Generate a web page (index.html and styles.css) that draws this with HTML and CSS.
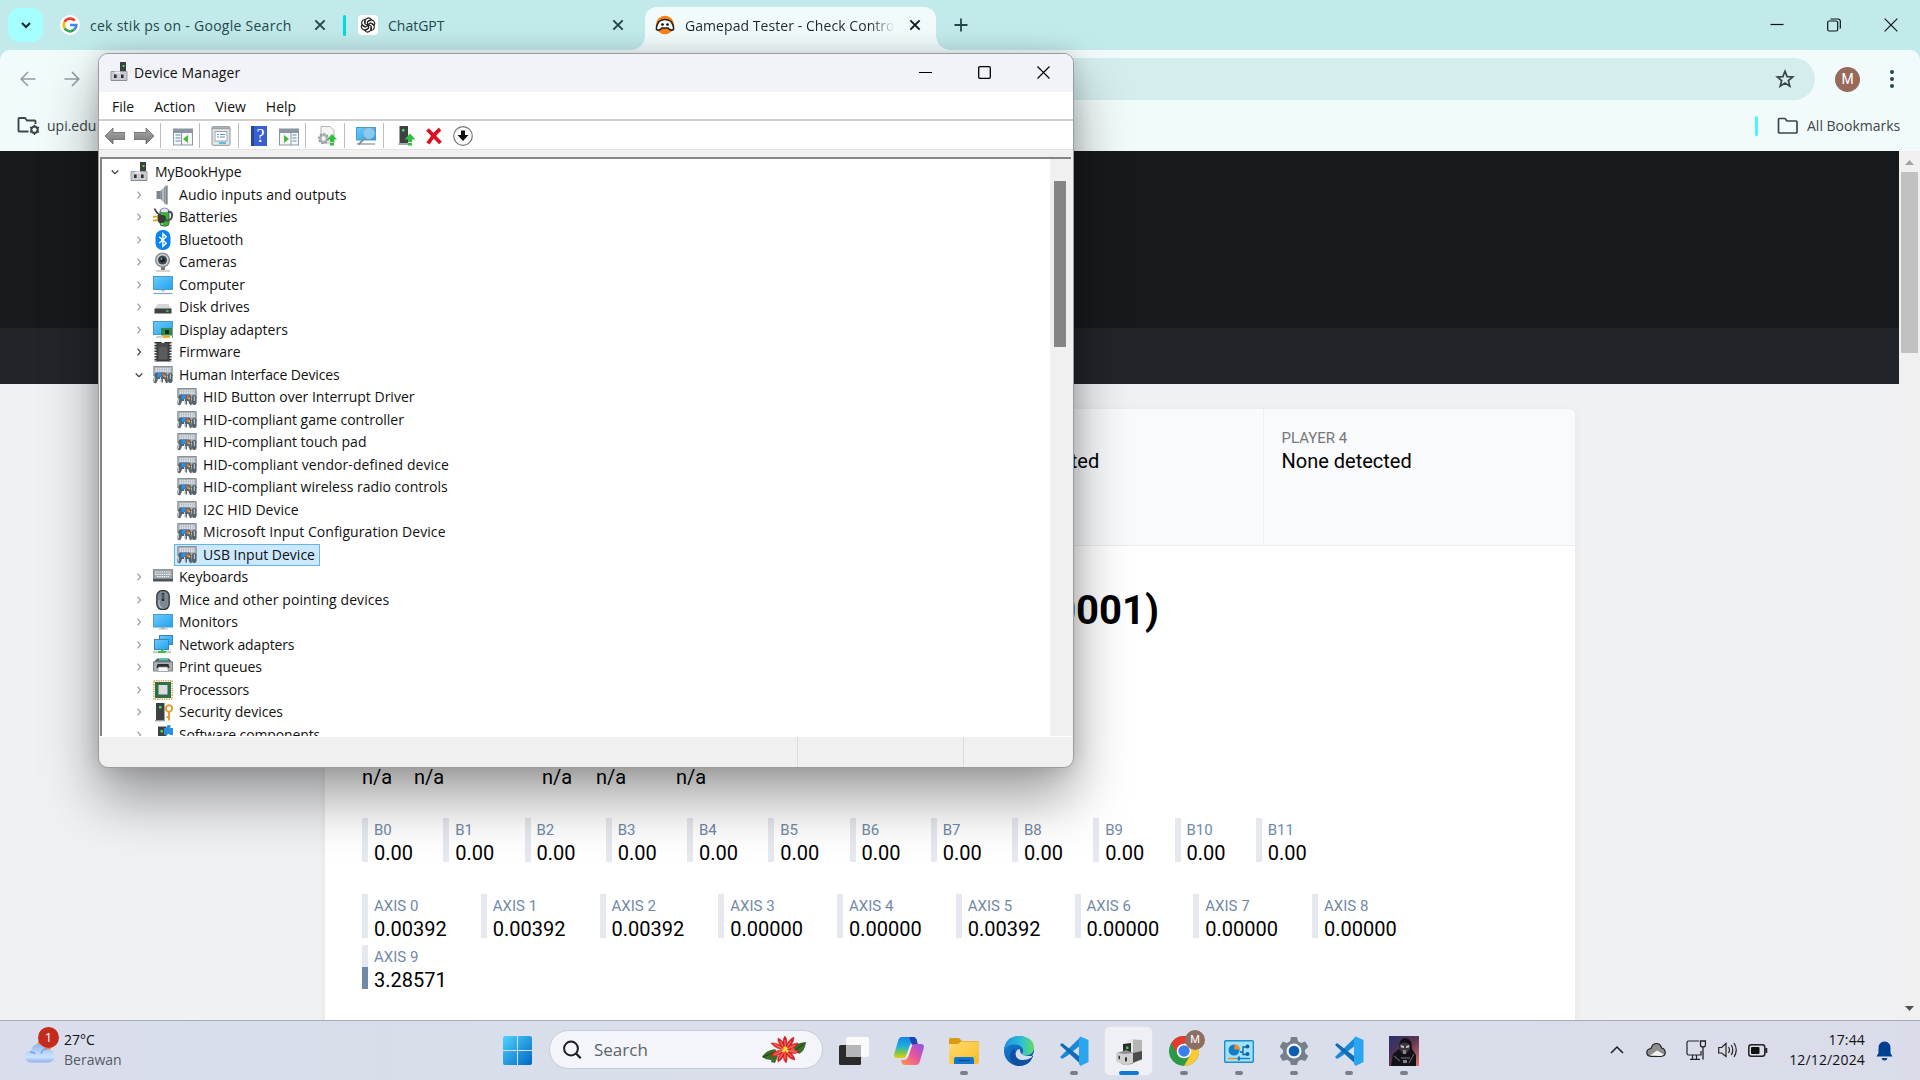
FILE: index.html
```html
<!DOCTYPE html>
<html lang="en">
<head>
<meta charset="utf-8">
<title>Gamepad Tester</title>
<link rel="stylesheet" href="styles.css">
</head>
<body>
<svg class="defs" aria-hidden="true">
  <defs>
    <linearGradient id="gScreen" x1="0" y1="0" x2="1" y2="1"><stop offset="0" stop-color="#6fcbfb"/><stop offset="1" stop-color="#1fa2f4"/></linearGradient>
    <linearGradient id="gGrey" x1="0" y1="0" x2="0" y2="1"><stop offset="0" stop-color="#aaa"/><stop offset="1" stop-color="#777"/></linearGradient>
    <linearGradient id="gSteel" x1="0" y1="0" x2="1" y2="0"><stop offset="0" stop-color="#5f6a73"/><stop offset=".5" stop-color="#c4cbd1"/><stop offset="1" stop-color="#6a747c"/></linearGradient>
    <linearGradient id="gWin" x1="0" y1="0" x2="1" y2="1"><stop offset="0" stop-color="#4fd3ff"/><stop offset="1" stop-color="#0067c4"/></linearGradient>
    <linearGradient id="gFolder" x1="0" y1="0" x2="1" y2="1"><stop offset="0" stop-color="#ffdc70"/><stop offset="1" stop-color="#f9bb26"/></linearGradient>
    <linearGradient id="gEdge" x1="0" y1="0" x2="1" y2="0"><stop offset="0" stop-color="#1b8fe0"/><stop offset=".6" stop-color="#2fc1d6"/><stop offset="1" stop-color="#62dd5c"/></linearGradient>
    <linearGradient id="gEdge2" x1="0" y1="0" x2="1" y2="1"><stop offset="0" stop-color="#1783d8"/><stop offset="1" stop-color="#0c4a9a"/></linearGradient>
    <linearGradient id="gCopA" x1="0" y1="0" x2="0" y2="1"><stop offset="0" stop-color="#1583e8"/><stop offset=".45" stop-color="#1fb0d8"/><stop offset=".75" stop-color="#7cc84e"/><stop offset="1" stop-color="#f2c811"/></linearGradient>
    <linearGradient id="gCopB" x1="1" y1="0" x2="0" y2="1"><stop offset="0" stop-color="#8a52e8"/><stop offset=".5" stop-color="#e9569c"/><stop offset="1" stop-color="#ff9a4a"/></linearGradient>
    <linearGradient id="gCloud" x1="0" y1="0" x2="0" y2="1"><stop offset="0" stop-color="#8fb6f0"/><stop offset=".7" stop-color="#cfe3fb"/><stop offset="1" stop-color="#8ab0ee"/></linearGradient>
    <linearGradient id="gVader" x1="0" y1="0" x2="1" y2="1"><stop offset="0" stop-color="#27306a"/><stop offset=".5" stop-color="#5d3550"/><stop offset="1" stop-color="#e57a6a"/></linearGradient>
    <linearGradient id="gPetal" x1="0" y1="0" x2="0" y2="1"><stop offset="0" stop-color="#c9151a"/><stop offset=".5" stop-color="#f2443a"/><stop offset="1" stop-color="#d81e1e"/></linearGradient>

    <symbol id="close" viewBox="0 0 12 12"><path d="M2 2l8 8M10 2l-8 8" stroke="currentColor" stroke-width="1.7" fill="none"/></symbol>
    <symbol id="root" viewBox="0 0 20 20">
      <rect x="11" y="0" width="6" height="11" fill="#3c4043"/><rect x="13.500" y="3" width="2" height="2" fill="#3be04a"/>
      <path d="M2 9.500h16v9H2z" fill="#c9ccd0" stroke="#9a9da1"/><path d="M6 9.500h5v2H6z" fill="#eee"/>
      <rect x="5" y="12.500" width="2.600" height="3.500" fill="#2e3134"/><rect x="12" y="12.500" width="2.600" height="3.500" fill="#2e3134"/><path d="M2 18.500h16" stroke="#8a8d90"/>
    </symbol>
    <symbol id="audio" viewBox="0 0 20 20"><path d="M3.500 6h4v8h-4z" fill="#7c8790"/><path d="M7.500 6l5-5.500v19L7.500 14z" fill="url(#gSteel)"/><path d="M12.500.5h2.500v19h-2.500z" fill="#a4adb5"/><path d="M13.300 1v18" stroke="#737c84"/></symbol>
    <symbol id="battery" viewBox="0 0 20 20"><rect x="7" y="2" width="9" height="17" rx="3" fill="#35b435" stroke="#4e5d50"/><path d="M7.500 5.500V4q0-3 4-3t4 3v1.500z" fill="#dfe6f5" stroke="#6b7280" stroke-width=".7"/><path d="M9 10v8" stroke="#91e080" stroke-width="1.500"/><path d="M1.500 1.500q2 5 6 6.500" stroke="#3a3a3a" stroke-width="1.600" fill="none"/><path d="M15 5q4.500-1 4 4t-6 4.500" stroke="#4a4f50" stroke-width="2" fill="none"/><path d="M4.500 8h5q3.500 0 3.500 3.500T9.500 16h-3L4.500 14z" fill="#3b3b3b"/><path d="M0 9.700h5M0 13.300h5" stroke="#d8a21a" stroke-width="1.800"/></symbol>
    <symbol id="bt" viewBox="0 0 20 20"><rect x="2.500" y="0" width="15" height="20" rx="7" fill="#0a84f5"/><path d="M6.200 6.700l7 6.600-3.300 3V3.700l3.300 3-7 6.600" stroke="#fff" stroke-width="1.400" fill="none"/></symbol>
    <symbol id="camera" viewBox="0 0 20 20"><path d="M8 14h4v4H8z" fill="#777"/><path d="M3 19h14" stroke="#b5b5b5" stroke-width="1.200"/><circle cx="9.500" cy="8" r="7.600" fill="#8e9194"/><circle cx="9.500" cy="8" r="6" fill="#d5d8da"/><circle cx="9.500" cy="8" r="4.600" fill="#3f4850"/><circle cx="9.500" cy="8" r="2.300" fill="#141a20"/><circle cx="8.500" cy="7" r="1" fill="#6fa0d0"/></symbol>
    <symbol id="computer" viewBox="0 0 20 20"><rect x=".5" y="1.500" width="19" height="13" fill="url(#gScreen)" stroke="#4b9ac8"/><path d="M8 15h4v1.500H8z" fill="#b5c6d3"/><path d="M.5 18.500h19" stroke="#8ba7bb" stroke-width="1.300"/></symbol>
    <symbol id="disk" viewBox="0 0 20 20"><path d="M4.500 7h11l3 5h-17z" fill="#d5d6d8"/><rect x="1.500" y="11.500" width="17" height="5" fill="#3f4245"/><rect x="13" y="13.300" width="2.600" height="1.500" fill="#45d64c"/></symbol>
    <symbol id="display" viewBox="0 0 20 20"><rect x=".5" y="1.500" width="19" height="13" fill="url(#gScreen)" stroke="#4b9ac8"/><path d="M3 17h6" stroke="#8ba7bb"/><rect x="8" y="8" width="11.500" height="7.500" fill="#2b8a4e"/><rect x="12" y="10" width="4" height="4" fill="#1d2a24"/><path d="M9.500 16.700h7.500" stroke="#e9a91c" stroke-width="2.200"/><path d="M19.500 7v11" stroke="#8c979d"/></symbol>
    <symbol id="firmware" viewBox="0 0 20 20"><path d="M2.700 0v20M17.300 0v20" stroke="#343638" stroke-width="2.500" stroke-dasharray="1.600 1.200"/><path d="M4 .5h4q2 3 4 0h4V19H4z" fill="#4a4c4e" stroke="#2b2d2f"/><path d="M6 17V5h8v12z" fill="#5a5c5e"/></symbol>
    <symbol id="hid" viewBox="0 0 20 20"><rect x=".8" y="1.500" width="18.400" height="9" fill="#aab3bb" stroke="#87929b"/><path d="M2.500 3.800h15M2.500 6h15" stroke="#eef1f3" stroke-width="1.300" stroke-dasharray="1.600 .7"/><path d="M3.500 7.500h8.500q1.700 0 2.200 3L15 16q0 2.500-1.600 2.200-1-.2-2-4.200H10v3.500H8.500V14H5q-1 4-2.300 4.200Q.3 18.500.4 15.500l.8-5q.5-3 2.300-3z" fill="#59636c"/><path d="M1.500 11.500v5" stroke="#b9c1c8" stroke-width="1.300"/><path d="M4.500 8.500l4-1 .3 4-4.300.7z" fill="#2193f5"/><path d="M9.700 8.500h1.800v3.500H9.700z" fill="#e6703a"/><path d="M11.500 10.500h1.400v1.700h-1.400z" fill="#f5d23c"/><path d="M7.500 12v5" stroke="#d5dadf" stroke-width="1"/><rect x="14.900" y="8" width="4.700" height="10" rx="2.200" fill="#56616a"/><path d="M17.300 9v5" stroke="#ccd3d8"/></symbol>
    <symbol id="keyboard" viewBox="0 0 20 20"><rect x=".5" y="2.700" width="19" height="9" fill="#9ca5ad" stroke="#7d868e"/><path d="M2 5h16M2 7.300h16M4 9.600h12" stroke="#f4f6f7" stroke-width="1.200" stroke-dasharray="1.500 .7"/><rect x="0" y="12" width="20" height="2.500" fill="#4c545b"/></symbol>
    <symbol id="mouse" viewBox="0 0 20 20"><rect x="3.800" y=".6" width="12.400" height="19" rx="5.500" fill="#7c8994" stroke="#2d3338" stroke-width="1.300"/><path d="M6 10v4q1 3.500 3 3.500" stroke="#aab6c0" stroke-width="1.300" fill="none"/><path d="M10 3v8" stroke="#202427" stroke-width="2.400"/><path d="M10 4v5" stroke="#8e989f" stroke-width=".9"/></symbol>
    <symbol id="monitor" viewBox="0 0 20 20"><rect x=".5" y="2.500" width="19" height="12.500" fill="url(#gScreen)" stroke="#4b9ac8"/><path d="M8 15.500h4v1.200H8zM5 17h10" fill="#b5c6d3" stroke="#9fb2c2" stroke-width=".8"/></symbol>
    <symbol id="network" viewBox="0 0 20 20"><rect x="6.500" y=".5" width="13" height="9" fill="url(#gScreen)" stroke="#3f83b0"/><rect x="1.500" y="4.500" width="14" height="10" fill="url(#gScreen)" stroke="#3f83b0"/><path d="M0 17h18" stroke="#c9cccf" stroke-width="2.500"/><path d="M8 14.500h2.500v1.500H13v2H5v-2h3z" fill="#35c04a"/></symbol>
    <symbol id="printer" viewBox="0 0 20 20"><path d="M4 1.500h12l3.500 4H.5z" fill="#5b6166"/><path d="M6.500 1.500h8l1 2h-10z" fill="#4cc6b0"/><rect x=".5" y="5" width="19" height="9" fill="#a9b1b8" stroke="#7d858b"/><path d="M4.500 7h11l1 4h-13z" fill="#2b2e30"/><path d="M5.500 10h9l1 4.500h-11z" fill="#f5f5f5" stroke="#8d9499" stroke-width=".7"/></symbol>
    <symbol id="cpu" viewBox="0 0 20 20"><rect x=".8" y=".8" width="18.400" height="18.400" fill="none" stroke="#c9a544" stroke-width="1.500" stroke-dasharray="1.300 1"/><rect x="2" y="2" width="16" height="16" fill="#2f6d4c"/><rect x="5.500" y="5" width="9" height="9.500" fill="#d9dcda"/></symbol>
    <symbol id="security" viewBox="0 0 20 20"><rect x="3" y="1" width="8.500" height="17" fill="#3e4144"/><rect x="6" y="4" width="2.500" height="2.500" fill="#3fdf4a"/><path d="M2 18.700h10" stroke="#909396" stroke-width="1.200"/><circle cx="16" cy="6.500" r="3.200" fill="none" stroke="#e2a12f" stroke-width="2"/><path d="M16 9.500v9M16 15h-2.500" stroke="#e2a12f" stroke-width="2"/></symbol>
    <symbol id="software" viewBox="0 0 20 20"><rect x="5" y="1.500" width="8.500" height="17" fill="#3e4144"/><rect x="7.500" y="5" width="2.500" height="2.500" fill="#3fdf4a"/><path d="M11 3h3q-1-3 2-3t1 3h3v7h-3q-1-2-3 0h-3z" fill="#2b8fe0"/></symbol>

    <symbol id="vscode" viewBox="0 0 30 30"><path d="M21 1.500L3.500 18.500 1 21l2 2L8 20 23 8z" fill="#1a8ad6"/><path d="M1 9l2-2 19 14.500v7z" fill="#0f6db8"/><path d="M21.500.5L29.500 4v22l-8 4-1.500-2V2z" fill="#2aa5f0"/></symbol>
  </defs>
</svg>

<header class="browser">
  <div class="tabs">
    <span class="tab-search"><svg width="12" height="12" viewBox="0 0 12 12"><path d="M2 4l4 4 4-4" fill="none" stroke="#0b2a2c" stroke-width="2"/></svg></span>
    <div class="tab tab-a">
      <svg class="fav" viewBox="0 0 20 20"><circle cx="10" cy="10" r="10" fill="#fff"/><g fill="none" stroke-width="2.700"><path d="M14.800 5.600A6.300 6.300 0 0 0 4.600 7" stroke="#ea4335"/><path d="M4.600 7a6.300 6.300 0 0 0 0 6.200" stroke="#fbbc05"/><path d="M4.600 13.200a6.300 6.300 0 0 0 9.700 1.400" stroke="#34a853"/><path d="M14.300 14.600A6.300 6.300 0 0 0 16.300 10H10" stroke="#4285f4"/></g></svg>
      <span class="tab-title t1">cek stik ps on - Google Search</span>
      <svg class="x"><use href="#close"/></svg>
    </div>
    <i class="tab-sep"></i>
    <div class="tab tab-b">
      <svg class="fav" viewBox="0 0 20 20"><rect width="20" height="20" rx="4" fill="#fff"/><g transform="translate(10 10)" fill="none" stroke="#222" stroke-width="1.200"><path d="M-3-1.700V-4A3.400 3.400 0 0 1 3.200-5.500L-.5-3.400V1"/><path d="M-3-1.700V-4A3.400 3.400 0 0 1 3.200-5.500L-.5-3.400V1" transform="rotate(60)"/><path d="M-3-1.700V-4A3.400 3.400 0 0 1 3.200-5.500L-.5-3.400V1" transform="rotate(120)"/><path d="M-3-1.700V-4A3.400 3.400 0 0 1 3.200-5.500L-.5-3.400V1" transform="rotate(180)"/><path d="M-3-1.700V-4A3.400 3.400 0 0 1 3.200-5.500L-.5-3.400V1" transform="rotate(240)"/><path d="M-3-1.700V-4A3.400 3.400 0 0 1 3.200-5.500L-.5-3.400V1" transform="rotate(300)"/></g></svg>
      <span class="tab-title t2">ChatGPT</span>
      <svg class="x"><use href="#close"/></svg>
    </div>
    <div class="tab tab-c">
      <svg class="fav" viewBox="0 0 20 20"><circle cx="10" cy="10" r="9.200" fill="#ff7f11"/><path d="M4 6.500Q10 2.500 16 6.500 19 11 18.500 14.500q-3 1.800-5.500-1.500H7Q4.500 16.300 1.500 14.500 1 11 4 6.500z" fill="#fff" stroke="#222" stroke-width="1.500"/><circle cx="7.500" cy="9.500" r="1.300"/><circle cx="12.500" cy="9.500" r="1.300"/></svg>
      <span class="tab-title t3">Gamepad Tester - Check Contro</span>
      <svg class="x"><use href="#close"/></svg>
    </div>
    <svg class="plus" viewBox="0 0 14 14"><path d="M7 .5v13M.5 7h13" stroke="#24484b" stroke-width="1.800"/></svg>
    <div class="win-controls">
      <svg width="14" height="14" viewBox="0 0 14 14"><path d="M.5 6.500h13" stroke="#111" stroke-width="1.200"/></svg>
      <svg width="14" height="14" viewBox="0 0 14 14"><rect x=".7" y="3" width="10" height="10" rx="1.500" fill="none" stroke="#111" stroke-width="1.200"/><path d="M3.500 1H11q2.300 0 2.300 2.300V10.500" fill="none" stroke="#111" stroke-width="1.200"/></svg>
      <svg width="14" height="14" viewBox="0 0 14 14"><path d="M.7.700l12.600 12.600M13.300.7L.7 13.300" stroke="#111" stroke-width="1.200"/></svg>
    </div>
  </div>
  <div class="chrome-body">
    <div class="toolbar">
      <svg class="nav" viewBox="0 0 16 16"><path d="M15.500 8H1.500M8 1L1.200 8 8 15" fill="none" stroke="#929c9e" stroke-width="1.600"/></svg>
      <svg class="nav" viewBox="0 0 16 16"><path d="M.5 8h14M8 1l6.800 7L8 15" fill="none" stroke="#929c9e" stroke-width="1.600"/></svg>
      <div class="omnibox"><svg width="20" height="20" viewBox="0 0 20 20"><path d="M10 2.300l2.100 5.300 5.600.4-4.300 3.600 1.400 5.500L10 14.100 5.200 17.100l1.400-5.500L2.300 8l5.600-.4z" fill="none" stroke="#3a4446" stroke-width="1.700"/></svg></div>
      <span class="avatar">M</span>
      <svg class="dots" width="6" height="20" viewBox="0 0 6 20"><g fill="#24484b"><circle cx="3" cy="3" r="2"/><circle cx="3" cy="10" r="2"/><circle cx="3" cy="17" r="2"/></g></svg>
    </div>
    <div class="bookmarks">
      <svg width="23" height="20" viewBox="0 0 23 20"><path d="M11.500 15.500H2.500Q1.500 15.500 1.500 14.500V3Q1.500 2 2.500 2H8l2 2.500h7.500q1 0 1 1V8" fill="none" stroke="#3d4648" stroke-width="1.900"/><circle cx="17.500" cy="13.800" r="3.300" fill="none" stroke="#3d4648" stroke-width="2"/><path d="M17.500 8.700v10.200M13 11.200l9 5.200M22 11.200l-9 5.200" stroke="#3d4648" stroke-width="1.500"/><circle cx="17.500" cy="13.800" r="2" fill="#f2fbfc"/></svg>
      <span class="bm-a">upi.edu</span>
      <i class="bm-sep"></i>
      <svg width="22" height="18" viewBox="0 0 22 18"><path d="M1.500 2.500q0-1 1-1H8l2 2.500h9q1 0 1 1v10q0 1-1 1H2.500q-1 0-1-1z" fill="none" stroke="#3d4648" stroke-width="1.700"/></svg>
      <span class="bm-b">All Bookmarks</span>
    </div>
  </div>
</header>

<main class="viewport">
  <div class="page">
    <div class="hero"></div>
    <div class="subnav"></div>
    <section class="card">
      <div class="players">
        <div class="player"></div>
        <div class="player"></div>
        <div class="player p3"><b>None detected</b></div>
        <div class="player"><small>PLAYER 4</small><b>None detected</b></div>
      </div>
      <h1>0001)</h1>
      <div class="meta"><span class="m1">n/a</span><span class="m2">n/a</span><span class="m3">n/a</span><span class="m4">n/a</span><span>n/a</span></div>
      <div class="buttons">
        <div class="cell"><small>B0</small><b>0.00</b></div><div class="cell"><small>B1</small><b>0.00</b></div><div class="cell"><small>B2</small><b>0.00</b></div><div class="cell"><small>B3</small><b>0.00</b></div><div class="cell"><small>B4</small><b>0.00</b></div><div class="cell"><small>B5</small><b>0.00</b></div><div class="cell"><small>B6</small><b>0.00</b></div><div class="cell"><small>B7</small><b>0.00</b></div><div class="cell"><small>B8</small><b>0.00</b></div><div class="cell"><small>B9</small><b>0.00</b></div><div class="cell"><small>B10</small><b>0.00</b></div><div class="cell"><small>B11</small><b>0.00</b></div>
      </div>
      <div class="axes">
        <div class="cell"><small>AXIS 0</small><b>0.00392</b></div><div class="cell"><small>AXIS 1</small><b>0.00392</b></div><div class="cell"><small>AXIS 2</small><b>0.00392</b></div><div class="cell"><small>AXIS 3</small><b>0.00000</b></div><div class="cell"><small>AXIS 4</small><b>0.00000</b></div><div class="cell"><small>AXIS 5</small><b>0.00392</b></div><div class="cell"><small>AXIS 6</small><b>0.00000</b></div><div class="cell"><small>AXIS 7</small><b>0.00000</b></div><div class="cell"><small>AXIS 8</small><b>0.00000</b></div><div class="cell full"><small>AXIS 9</small><b>3.28571</b></div>
      </div>
    </section>
  </div>
  <div class="scrollbar">
    <svg width="21" height="21" viewBox="0 0 21 21"><path d="M6 14h9l-4.500-5z" fill="#a3a3a3"/></svg>
    <i class="thumb"></i>
    <svg class="down" width="21" height="21" viewBox="0 0 21 21"><path d="M6 7h9l-4.500 5z" fill="#505050"/></svg>
  </div>
</main>

<footer class="taskbar">
  <div class="weather">
    <svg width="32" height="40" viewBox="0 0 32 40"><circle cx="21" cy="17" r="7.500" fill="#f4862a"/><path d="M8 35.500Q1 35.500 1 29.500T7 24Q8 17 14.500 17q5 0 7 5 9 0 9 7t-8 6.500z" fill="url(#gCloud)"/><path d="M17 27q1-5 6-5M6 25q4 0 5 2" stroke="#5e92e6" stroke-width="1.300" fill="none" opacity=".7"/></svg>
    <span class="badge">1</span>
    <div><b>27°C</b><span>Berawan</span></div>
  </div>
  <div class="dock">
    <svg class="start" viewBox="0 0 29 29"><path d="M0 2q0-2 2-2h12v14H0zM15 0h12q2 0 2 2v12H15zM0 15h14v14H2q-2 0-2-2zM15 15h14v12q0 2-2 2H15z" fill="url(#gWin)"/></svg>
    <div class="search">
      <svg width="20" height="20" viewBox="0 0 20 20"><circle cx="9" cy="8.500" r="6.900" fill="none" stroke="#1d1d1d" stroke-width="2"/><path d="M14 13.500l4.700 4.700" stroke="#1d1d1d" stroke-width="2.300"/></svg>
      <span>Search</span>
      <svg class="flower" width="44" height="28" viewBox="0 0 44 28">
        <path d="M0 21q4-7 13-8l3 5-6 6Q4 24 0 21zM11 18l5 2-3 7-4-1zM30 11q4-4 14-5-1 9-7 12z" fill="#3c6b2a"/><path d="M1 21l12-5M43 7L32 15" stroke="#1f3e18"/>
        <path d="M23 14Q13 13 9 7q8-1 14 7zM23 14Q15 8 16 2q7 3 7 12zM23 14Q19 5 23 0q4 5 0 14zM23 14Q25 4 32 1q0 8-9 13zM23 14q6-7 13-7-3 7-13 7zM23 14q8-3 14 2-7 4-14-2zM23 14q9 3 10 10-8-1-10-10zM23 14q4 8 1 13-5-5-1-13zM23 14q-1 9-7 12-2-6 7-12zM23 14q-6 7-14 6 3-7 14-6z" fill="url(#gPetal)" stroke="#b8141a" stroke-width=".5"/>
        <g stroke="#ff8574" stroke-width=".8"><path d="M23 14L12 8M23 14l-5-9M23 14V4M23 14l6-9M23 14l10-5M23 14l11 2M23 14l7 7M23 14v9M23 14l-6 9M23 14l-11 5"/></g>
        <g fill="#f1df35"><circle cx="23.500" cy="12.500" r="2"/><circle cx="21.500" cy="14.500" r="1.500"/><circle cx="25" cy="15" r="1.500"/></g></svg>
    </div>
    <span class="app"><svg viewBox="0 0 30 30"><rect x="0" y="9" width="22" height="20" rx="1.500" fill="#2b2b2b"/><rect x="7" y="1" width="23" height="20" rx="1.500" fill="#fafafa"/><path d="M7 9h15v12H7z" fill="#b4b6b8"/></svg></span>
    <span class="app"><svg viewBox="0 0 30 30"><path d="M8 1h11q3 0 3.500 3L23 6h-3q-3 0-4 3l-3 10q-1 3-4 3H3q-4 0-2.500-5L4 5q1-4 4-4z" fill="url(#gCopA)"/><path d="M15 1h4q3 0 4 4l1 4h-6z" fill="#1b44b8"/><path d="M22 29H11q-3 0-3.500-3L7 24h3q3 0 4-3l3-10q1-3 4-3h6q4 0 2.500 5L26 25q-1 4-4 4z" fill="url(#gCopB)"/><path d="M15.500 11q.7-2.500 3-2.500l-4 11q-.7 2-3 2z" fill="#e9effa"/></svg></span>
    <span class="app run"><svg viewBox="0 0 30 30"><path d="M0 4q0-2 2-2h8l3 3h15q2 0 2 2v6H0z" fill="#dc9a10"/><path d="M0 8h9l3-2.500h16q2 0 2 2V26q0 2-2 2H2q-2 0-2-2z" fill="url(#gFolder)"/><path d="M5 28v-5q0-2 2-2h16q2 0 2 2v5z" fill="#1079cf"/><path d="M9 24.500h12" stroke="#064b8b" stroke-width="1.300"/></svg></span>
    <span class="app"><svg viewBox="0 0 30 30"><circle cx="15" cy="15" r="15" fill="url(#gEdge2)"/><path d="M0 14Q1.500 0 15.500 0 30 1 30 12q-.5 7-7.500 7.500-4 .2-5-1.500 2-1.500 1.500-4.500Q17 8.500 10.500 8.500 3.500 8.500 0 14z" fill="url(#gEdge)"/><path d="M11 14q-1 8 7 10.500 5 1 9.700-1.500Q24 30 15 30 6 28.500 6 20q0-5 5-8z" fill="#0d519f"/><path d="M17.500 18q-2-1.500-1.500-5-4 0-4.500 5 .5 5.500 7 6 5 0 9-2.500L30 16v4l-4 0q-6 0-8.500-2z" fill="#dadeeb"/></svg></span>
    <span class="app run"><svg viewBox="0 0 30 30"><use href="#vscode"/></svg></span>
    <span class="app active"><svg viewBox="0 0 30 30"><path d="M13 5l6-1.500L28 4v20l-9 2-6-4z" fill="#b5b5b5"/><path d="M13 5l6-1.500v18L13 20z" fill="#e8e8e8"/><path d="M9 8l8-1v11l-8 1z" fill="#2c2c2c"/><rect x="12" y="10.500" width="2.500" height="2.500" fill="#35d03f"/><path d="M3 17l9-3 8 3-1 11-9 1-7-4z" fill="#8e8e8e"/><path d="M2 16.500l8 1.500 9-1v10l-8 2-9-4z" fill="#d0d0d0"/><path d="M4.500 19.500l1.500.4v3.500l-1.500-.6zM11 21.500l2-.3v4l-2 .2z" fill="#333"/><path d="M19 17l9-2v8l-9 4z" fill="#4c4c4c"/></svg></span>
    <span class="app run chrome"><svg viewBox="0 0 30 30"><circle cx="15" cy="15" r="15" fill="#2b9a47"/><path d="M2 7.500A15 15 0 0 1 28 7.500H15L9 18.500z" fill="#e33b2e"/><path d="M28 7.500A15 15 0 0 1 15 30l6.500-11.500L15 7.500z" fill="#fcc934"/><circle cx="15" cy="15" r="7.300" fill="#fff"/><circle cx="15" cy="15" r="5.700" fill="#3b7ded"/></svg><em>M</em></span>
    <span class="app run"><svg viewBox="0 0 30 30"><rect x=".7" y="4.700" width="28.600" height="21.600" rx="1" fill="#9fe0fb" stroke="#1e8fc8" stroke-width="1.400"/><circle cx="10" cy="14" r="5.500" fill="#137cc9"/><path d="M10.500 13.500V8q5 .5 5.500 5.500z" fill="#f2901f"/><path d="M16 16h3V11h3M19 16v2.500h3" stroke="#0f63a5" stroke-width="1.300" fill="none"/><g fill="#0f63a5"><circle cx="23.500" cy="10.500" r="2"/><circle cx="23.500" cy="18" r="2"/></g><path d="M4 22.500h9" stroke="#f2901f" stroke-width="1.500"/><path d="M13 22.500h13" stroke="#1079cf" stroke-width="1.300"/><path d="M15 20.500v4" stroke="#1079cf" stroke-width="2"/></svg></span>
    <span class="app run"><svg viewBox="0 0 30 30"><path d="M12 1h6l1 4.300 3 1.700 4.300-1.400 3 5.200L26 14v3l3.300 3-3 5-4.300-1.300-3 1.700L18 29h-6l-1-3.600-3-1.700L3.700 25l-3-5L4 17v-3L.7 10.800l3-5.200L8 7l3-1.700z" fill="#76808a"/><circle cx="15" cy="15" r="7.500" fill="#f0f3f6"/><circle cx="15" cy="15" r="5.300" fill="#0f5db0"/></svg></span>
    <span class="app run"><svg viewBox="0 0 30 30"><use href="#vscode"/></svg></span>
    <span class="app run"><svg viewBox="0 0 30 30"><rect width="30" height="30" fill="url(#gVader)"/><path d="M2 30l2-12 6-5q0-11 6-11 7 0 7 11l4 6v11z" fill="#121118"/><path d="M11 8q4-3 9 0l1 5-4 5h-3l-4-5z" fill="#3a3740"/><path d="M11.500 9l3.500 1v2l-3-.5zM17 10l3.500-1-.5 2.500-3 .5z" fill="#c9b8c0"/><path d="M14 14h3v4h-3z" fill="#888"/><path d="M5 20l6 5M12 22h9M20 27l5-9" stroke="#5a5560" stroke-width="1.300"/><path d="M14 24h4v3h-4z" fill="#7c8496"/></svg></span>
  </div>
  <div class="tray">
    <svg class="chev" width="14" height="10" viewBox="0 0 14 10"><path d="M1 8l6-6 6 6" fill="none" stroke="#1c1c1c" stroke-width="1.500"/></svg>
    <svg class="cl" width="20" height="16" viewBox="0 0 20 16"><path d="M5 14.300Q.8 14 .8 10.500T5 6.500Q6.500 1.500 10.500 1.500t5 4.500q3.700.7 3.700 4.500T15 14.300z" fill="#8f8f8f" stroke="#222" stroke-width="1.200"/><path d="M4 13.500l7-5 7 4-3 1.500z" fill="#f2f2f2"/></svg>
    <svg class="net" width="20" height="20" viewBox="0 0 20 20"><path d="M13 1H2.500Q1 1 1 2.500v11Q1 15 2.500 15H15v-4M6.500 15v4M10.500 15v4M4 19.300h10" fill="none" stroke="#222" stroke-width="1.200"/><path d="M14.500 1h5v4q0 2-2.500 2t-2.500-2zM17 7v12.500" fill="none" stroke="#222" stroke-width="1.300"/></svg>
    <svg class="spk" width="20" height="18" viewBox="0 0 20 18"><path d="M.7 6.500h3L8 2.500v13L3.700 12h-3z" fill="none" stroke="#222" stroke-width="1.200"/><path d="M10.500 6q2 3 0 6M13.300 4q3 5 0 10M16 2q4.500 7 0 14" fill="none" stroke="#222" stroke-width="1.200"/></svg>
    <svg width="20" height="13" viewBox="0 0 20 13"><rect x=".8" y=".8" width="16" height="11.400" rx="2.500" fill="none" stroke="#222" stroke-width="1.500"/><rect x="3" y="3" width="8.500" height="7" rx="1" fill="#111"/><path d="M18.300 4v5" stroke="#222" stroke-width="2"/></svg>
    <div class="clock"><span>17:44</span><span>12/12/2024</span></div>
    <svg width="17" height="20" viewBox="0 0 17 20"><path d="M8.500.5q6 .5 6 6.500v5l2 3.500H.5l2-3.500V7q0-6 6-6.500zM5.500 17h6q-.5 2.500-3 2.500T5.500 17z" fill="#003e92"/></svg>
  </div>
</footer>

<section class="devmgr">
  <div class="dm-title"><svg width="20" height="20"><use href="#root"/></svg><span>Device Manager</span>
    <div class="dm-controls">
      <svg width="13" height="13" viewBox="0 0 13 13"><path d="M0 6.500h13" stroke="#000" stroke-width="1.200"/></svg>
      <svg width="13" height="13" viewBox="0 0 13 13"><rect x=".7" y=".7" width="11.600" height="11.600" rx="1.200" fill="none" stroke="#000" stroke-width="1.300"/></svg>
      <svg width="13" height="13" viewBox="0 0 13 13"><path d="M.5.500l12 12M12.500.5l-12 12" stroke="#000" stroke-width="1.200"/></svg>
    </div>
  </div>
  <div class="dm-menu"><span>File</span><span>Action</span><span>View</span><span>Help</span></div>
  <div class="dm-tools">
    <svg class="tb" viewBox="0 0 20 20"><path d="M0 10l8-8v4.500h12v7H8V18z" fill="url(#gGrey)" stroke="#666" stroke-width=".8"/></svg>
    <svg class="tb g9" viewBox="0 0 20 20"><path d="M20 10l-8-8v4.500H0v7h12V18z" fill="url(#gGrey)" stroke="#666" stroke-width=".8"/></svg>
    <i class="g6"></i>
    <svg class="tb g12" viewBox="0 0 20 20"><rect x=".5" y="3" width="19" height="16" fill="#f4f6f8" stroke="#8a97a3"/><path d="M0 5h20" stroke="#8a97a3" stroke-width="4"/><path d="M2.500 9h5M2.500 12h5M2.500 15h5" stroke="#5e8db8" stroke-width="1.200"/><path d="M8.500 7v12" stroke="#8a97a3"/><path d="M15 9v8l-5-4z" fill="#4cb83a"/></svg>
    <i class="g6"></i>
    <svg class="tb g11" viewBox="0 0 20 20"><rect x="1" y=".7" width="18" height="18.600" rx="1" fill="#e4e7ea" stroke="#8a949c"/><path d="M1 2.200h18" stroke="#9aa4ac" stroke-width="2"/><rect x="4" y="5.500" width="12" height="9.500" fill="#fff" stroke="#9aa6b0"/><path d="M6 8.500h2M9 8.500h5M6 11h2M9 11h5" stroke="#5a96c8"/><path d="M8 17h7" stroke="#28b4d8" stroke-width="1.700"/></svg>
    <i class="g7"></i>
    <svg class="tb g10" viewBox="0 0 20 20"><rect x="2" y="0" width="16" height="20" fill="#3a5fd0"/><path d="M2 0h3v20H2z" fill="#28459e"/><text x="11.500" y="15.500" font-family="Liberation Serif, serif" font-size="18" fill="#fff" text-anchor="middle">?</text></svg>
    <svg class="tb g10" viewBox="0 0 20 20"><rect x=".5" y="3" width="19" height="16" fill="#f4f6f8" stroke="#8a97a3"/><path d="M0 5h20" stroke="#8a97a3" stroke-width="4"/><path d="M13.500 9h4M13.500 12h4M13.500 15h4" stroke="#5e8db8" stroke-width="1.200"/><path d="M12 7v12" stroke="#8a97a3"/><path d="M5 9v8l5-4z" fill="#4cb83a"/></svg>
    <i class="g6"></i>
    <svg class="tb g11" viewBox="0 0 20 20"><path d="M4 .5h9l4 4V17H4z" fill="#f5f5f5" stroke="#b0b0b0"/><circle cx="6.500" cy="12.500" r="4" fill="none" stroke="#8f979c" stroke-width="3" stroke-dasharray="2 1"/><circle cx="6.500" cy="12.500" r="3.400" fill="none" stroke="#a9b0b5" stroke-width="2"/><path d="M15 8l5 5.500h-3V16h-4v-2.500h-3zM13 17h4v2.500h-4z" fill="#2fbf3a"/></svg>
    <i class="g7"></i>
    <svg class="tb g11" viewBox="0 0 20 20"><rect x=".5" y="1.500" width="19" height="12.500" fill="url(#gScreen)" stroke="#4b9ac8"/><path d="M1 18h18" stroke="#9aa8b5" stroke-width="1.400"/><circle cx="13" cy="7.500" r="5" fill="#8fd4fb" fill-opacity=".8" stroke="#a8bccb" stroke-width="1.600"/><path d="M9.500 11.500l-7 7" stroke="#7d94a6" stroke-width="2"/></svg>
    <i class="g7"></i>
    <svg class="tb g12" viewBox="0 0 20 20"><rect x="3.500" y="0" width="8.500" height="17" fill="#3e4144"/><rect x="6" y="3" width="2.500" height="2.500" fill="#3fdf4a"/><path d="M2.500 18h10" stroke="#8b8e90" stroke-width="1.500"/><path d="M14 7.500l5.500 6H16V16h-4v-2.500H8.500zM12 17h4v2.500h-4z" fill="#2fbf3a"/></svg>
    <svg class="tb g8" viewBox="0 0 20 20"><path d="M3.500 3.500l13 13.500M16 3Q9 9 4 17.500" stroke="#dc1020" stroke-width="3.800" fill="none"/></svg>
    <svg class="tb g9" viewBox="0 0 20 20"><circle cx="10" cy="10" r="9.300" fill="#fbfbfb" stroke="#777" stroke-width="1.200"/><path d="M8 4.500h4V9h3.500L10 15 4.500 9H8z" fill="#111"/></svg>
  </div>
  <div class="dm-body">
    <ul class="tree">
      <li class="l0 open"><svg class="tw" viewBox="0 0 8 8"><path d="M.7 2.500L4 5.700l3.300-3.200"/></svg><svg class="ic"><use href="#root"/></svg><span>MyBookHype</span></li>
      <li><svg class="tw" viewBox="0 0 8 8"><path d="M2.500.7L5.500 4l-3 3.300"/></svg><svg class="ic"><use href="#audio"/></svg><span class="w1">Audio inputs and outputs</span></li>
      <li><svg class="tw" viewBox="0 0 8 8"><path d="M2.500.7L5.500 4l-3 3.300"/></svg><svg class="ic"><use href="#battery"/></svg><span>Batteries</span></li>
      <li><svg class="tw" viewBox="0 0 8 8"><path d="M2.500.7L5.500 4l-3 3.300"/></svg><svg class="ic"><use href="#bt"/></svg><span>Bluetooth</span></li>
      <li><svg class="tw" viewBox="0 0 8 8"><path d="M2.500.7L5.500 4l-3 3.300"/></svg><svg class="ic"><use href="#camera"/></svg><span>Cameras</span></li>
      <li><svg class="tw" viewBox="0 0 8 8"><path d="M2.500.7L5.500 4l-3 3.300"/></svg><svg class="ic"><use href="#computer"/></svg><span>Computer</span></li>
      <li><svg class="tw" viewBox="0 0 8 8"><path d="M2.500.7L5.500 4l-3 3.300"/></svg><svg class="ic"><use href="#disk"/></svg><span>Disk drives</span></li>
      <li><svg class="tw" viewBox="0 0 8 8"><path d="M2.500.7L5.500 4l-3 3.300"/></svg><svg class="ic"><use href="#display"/></svg><span>Display adapters</span></li>
      <li class="open"><svg class="tw" viewBox="0 0 8 8"><path d="M2.500.7L5.500 4l-3 3.300"/></svg><svg class="ic"><use href="#firmware"/></svg><span>Firmware</span></li>
      <li class="open"><svg class="tw" viewBox="0 0 8 8"><path d="M.7 2.500L4 5.700l3.300-3.200"/></svg><svg class="ic"><use href="#hid"/></svg><span class="w2">Human Interface Devices</span></li>
      <li class="l2"><svg class="ic"><use href="#hid"/></svg><span>HID Button over Interrupt Driver</span></li>
      <li class="l2"><svg class="ic"><use href="#hid"/></svg><span>HID-compliant game controller</span></li>
      <li class="l2"><svg class="ic"><use href="#hid"/></svg><span>HID-compliant touch pad</span></li>
      <li class="l2"><svg class="ic"><use href="#hid"/></svg><span class="w1">HID-compliant vendor-defined device</span></li>
      <li class="l2"><svg class="ic"><use href="#hid"/></svg><span>HID-compliant wireless radio controls</span></li>
      <li class="l2"><svg class="ic"><use href="#hid"/></svg><span>I2C HID Device</span></li>
      <li class="l2"><svg class="ic"><use href="#hid"/></svg><span class="w1">Microsoft Input Configuration Device</span></li>
      <li class="l2 sel"><svg class="ic"><use href="#hid"/></svg><span>USB Input Device</span></li>
      <li><svg class="tw" viewBox="0 0 8 8"><path d="M2.500.7L5.500 4l-3 3.300"/></svg><svg class="ic"><use href="#keyboard"/></svg><span>Keyboards</span></li>
      <li><svg class="tw" viewBox="0 0 8 8"><path d="M2.500.7L5.500 4l-3 3.300"/></svg><svg class="ic"><use href="#mouse"/></svg><span class="w1">Mice and other pointing devices</span></li>
      <li><svg class="tw" viewBox="0 0 8 8"><path d="M2.500.7L5.500 4l-3 3.300"/></svg><svg class="ic"><use href="#monitor"/></svg><span>Monitors</span></li>
      <li><svg class="tw" viewBox="0 0 8 8"><path d="M2.500.7L5.500 4l-3 3.300"/></svg><svg class="ic"><use href="#network"/></svg><span class="w2">Network adapters</span></li>
      <li><svg class="tw" viewBox="0 0 8 8"><path d="M2.500.7L5.500 4l-3 3.300"/></svg><svg class="ic"><use href="#printer"/></svg><span>Print queues</span></li>
      <li><svg class="tw" viewBox="0 0 8 8"><path d="M2.500.7L5.500 4l-3 3.300"/></svg><svg class="ic"><use href="#cpu"/></svg><span class="w2">Processors</span></li>
      <li><svg class="tw" viewBox="0 0 8 8"><path d="M2.500.7L5.500 4l-3 3.300"/></svg><svg class="ic"><use href="#security"/></svg><span>Security devices</span></li>
      <li><svg class="tw" viewBox="0 0 8 8"><path d="M2.500.7L5.500 4l-3 3.300"/></svg><svg class="ic"><use href="#software"/></svg><span class="w2">Software components</span></li>
    </ul>
    <div class="dm-scroll"><i></i></div>
  </div>
  <div class="dm-status"><i class="s1"></i><i class="s2"></i></div>
</section>
</body>
</html>
```

FILE: styles.css
```css
* { box-sizing: border-box; }
html, body { margin: 0; height: 100%; }
body {
  width: 1920px; height: 1080px; overflow: hidden;
  display: flex; flex-direction: column;
  font-family: "Open Sans", "Noto Sans", sans-serif;
  font-size: 14px; color: #1b1b1b; position: relative;
}
svg { display: block; flex: none; }
i, em { font-style: normal; }
.defs { position: absolute; width: 0; height: 0; }

/* Browser chrome */
.browser { height: 151px; flex: none; background: #c2eaeb; }
.tabs { height: 50px; display: flex; align-items: center; padding-left: 8px; }
.tab-search { width: 35px; height: 34px; border-radius: 11px; background: #a5ffff; display: grid; place-items: center; }
.tab { display: flex; align-items: center; height: 43px; }
.fav { width: 20px; height: 20px; margin-right: 10px; }
.tab-title { flex: 1; white-space: nowrap; overflow: hidden; color: #24484b; line-height: 22px; padding-top: 1px; }
.t1 { letter-spacing: .27px; }
.t3 { letter-spacing: .06px; }
.x { width: 14px; height: 14px; color: #24484b; }
.tab-a { width: 267px; margin-left: 17px; }
.tab-sep { width: 3px; height: 21px; margin-left: 16px; background: #00dbe2; border-radius: 2px; }
.tab-b { width: 267px; margin-left: 12px; }
.tab-c {
  width: 291px; margin: 7px 0 0 20px; padding: 0 13px 7px 10px; background: #f2fbfc;
  border-radius: 12px 12px 0 0; color: #1a2a2c; position: relative;
}
.tab-c::before, .tab-c::after { content: ""; position: absolute; bottom: 0; width: 14px; height: 14px; }
.tab-c::before { left: -14px; background: radial-gradient(circle at 0 0, transparent 13.5px, #f2fbfc 14px); }
.tab-c::after { right: -14px; background: radial-gradient(circle at 100% 0, transparent 13.5px, #f2fbfc 14px); }
.tab-c .tab-title { color: #1a2a2c; flex: none; width: 210px; -webkit-mask-image: linear-gradient(90deg, #000 88%, transparent); mask-image: linear-gradient(90deg, #000 88%, transparent); }
.tab-c .x { color: #101c1e; margin-left: 13px; }
.plus { width: 14px; height: 14px; margin-left: 18px; }
.win-controls { margin-left: auto; display: flex; gap: 43px; padding-right: 22px; }
.chrome-body { height: 101px; background: #f2fbfc; border-radius: 10px 10px 0 0; }
.toolbar { height: 58px; padding: 0 25px 0 20px; display: flex; align-items: center; }
.nav { width: 16px; height: 16px; margin-right: 28px; }
.omnibox { flex: 1; height: 42px; margin-left: 12px; border-radius: 21px; background: #d4eded; display: flex; align-items: center; justify-content: flex-end; padding-right: 20px; }
.avatar { width: 25px; height: 25px; border-radius: 50%; margin: 0 29px 0 20px; background: #976a5b; color: #fff; font: 14px/25px Roboto, sans-serif; text-align: center; }
.bookmarks { height: 43px; display: flex; align-items: center; padding: 0 18px 7px 17px; color: #3d4648; }
.bm-a { margin: -2px 0 0 7px; }
.bm-sep { width: 3px; height: 20px; margin: 0 19px 0 auto; border-radius: 2px; background: #4df5fb; }
.bm-b { margin: -2px 0 0 8px; width: 95px; white-space: nowrap; }

/* Gamepad page */
.viewport { flex: 1; min-height: 0; display: flex; background: #f0f1f3; font-family: Roboto, sans-serif; }
.page { flex: 1; height: 869px; overflow: hidden; }
.hero { height: 177px; background: #171a1d; }
.subnav { height: 56px; background: #212529; }
.card { width: 1250px; height: 700px; margin: 25px 0 0 325px; background: #fff; border-radius: 6px; overflow: hidden; box-shadow: 0 2px 10px rgba(0,0,0,.06); }
.players { display: flex; height: 137px; background: #f9fafc; border-bottom: 1px solid #ebedef; }
.player { width: 312.5px; padding: 18px; display: flex; flex-direction: column; border-left: 1px solid #eff1f3; }
.player:first-child { border-left: 0; }
.p3 { padding-top: 40px; }
small { font-size: 15px; line-height: 22px; color: #75777a; font-weight: 400; }
b { font-weight: 400; font-size: 20px; line-height: 24px; color: #000; }
h1 { margin: 41px 0 0; width: 834px; text-align: right; font-size: 40px; line-height: 48px; font-weight: 700; color: #000; }
.meta { margin: 130px 0 0 37px; display: flex; font-size: 20px; line-height: 24px; color: #000; }
.m1 { width: 52px; } .m2 { width: 128px; } .m3 { width: 54px; } .m4 { width: 80px; }
.cell { display: flex; flex-direction: column; height: 44px; padding-left: 6px; border-left: 6px solid #e5e8ee; margin-bottom: 7px; }
.cell small { color: #7189a8; line-height: 25px; }
.cell b { line-height: 20px; }
.buttons { display: flex; margin: 29px 0 0 37px; }
.buttons .cell { width: 81.25px; }
.axes { display: flex; flex-wrap: wrap; margin: 25px 0 0 37px; width: 1080px; }
.axes .cell { width: 118.75px; }
.cell.full { border-image: linear-gradient(#e5e8ee 50%, #7189a8 50%) 1; border-width: 0 0 0 6px; border-style: solid; }
.scrollbar { width: 21px; background: #f0f0f0; display: flex; flex-direction: column; align-items: center; }
.thumb { width: 17px; height: 181px; background: #c1c1c1; }
.down { margin-top: auto; }

/* Taskbar */
.taskbar { height: 60px; flex: none; background: linear-gradient(90deg, #dadded, #d7deea 20%, #dadeeb 40%, #dadcea); border-top: 1px solid #a9adba; display: flex; position: relative; }
.weather { display: flex; width: 503px; padding-left: 24px; position: relative; }
.weather > div { display: flex; flex-direction: column; padding: 8px 0 0 8px; line-height: 20px; }
.weather b { font-size: 14px; line-height: 21px; color: #111; }
.weather div span { color: #555a63; }
.badge { position: absolute; left: 38px; top: 6px; width: 21px; height: 21px; border-radius: 50%; background: #c42b1c; color: #fff; font-size: 13px; line-height: 20px; text-align: center; }
.weather svg { margin-top: 6px; }
.dock { display: flex; align-items: center; }
.start { width: 29px; height: 29px; }
.search { width: 274px; height: 39px; margin: 0 7px 2px 17px; border-radius: 20px; background: #f4f5fa; border: 1px solid #c8ccd8; display: flex; align-items: center; padding: 0 16px 0 12px; font-size: 17px; color: #606368; }
.search span { margin-left: 12px; flex: 1; }
.app { width: 47px; height: 48px; margin-right: 8px; border-radius: 5px; display: flex; justify-content: center; align-items: flex-start; padding-top: 9px; position: relative; }
.app > svg { width: 30px; height: 30px; }
.app.run::after, .app.active::after { content: ""; position: absolute; bottom: 0; left: 20px; width: 8px; height: 4px; border-radius: 2px; background: #7b7e85; }
.app.active { background: #eef0f6; box-shadow: 0 0 0 .5px #e2e4ea; }
.app.active::after { left: 14px; width: 20px; background: #0f78d4; }
.chrome em { position: absolute; left: 25px; top: 3px; width: 20px; height: 20px; border-radius: 50%; background: #8d6e63; color: #fff; font: 11px/20px Roboto, sans-serif; text-align: center; }
.tray { margin-left: auto; display: flex; align-items: center; padding-right: 27px; }
.chev, .cl { margin-top: -2px; }
.cl { margin-left: 22px; margin-right: 20px; }
.net, .spk, .spk + svg { margin-top: -1px; }
.spk { margin-left: 12px; margin-right: 10px; }
.clock { width: 97px; display: flex; flex-direction: column; text-align: right; line-height: 20px; color: #111; margin: -2px 11px 0 0; letter-spacing: .15px; white-space: nowrap; }

/* Device Manager window, floating over the browser */
.devmgr { position: absolute; left: 98px; top: 53px; width: 976px; height: 715px; border: 1px solid #9b9ca0; border-radius: 10px; background: #f0f0f0; display: flex; flex-direction: column; overflow: hidden; color: #111; box-shadow: 0 30px 56px rgba(0,0,0,.38), 0 0 20px rgba(0,0,0,.14); }
.dm-title { height: 38px; background: #f2f3f8; display: flex; align-items: center; padding: 0 23px 2px 10px; }
.dm-title > span { margin-left: 5px; letter-spacing: .12px; }
.dm-controls { margin-left: auto; display: flex; gap: 46px; }
.dm-menu { height: 27px; background: #fff; display: flex; align-items: center; gap: 20px; padding: 2px 0 0 13px; }
.dm-tools { height: 31px; background: #fff; border-top: 2px solid #cfcfd1; border-bottom: 1px solid #e4e4e4; display: flex; align-items: center; padding: 1px 0 0 6px; }
.dm-tools i { width: 1px; height: 25px; background: #bdbdbd; }
.tb { width: 20px; height: 20px; }
.g6 { margin-left: 6px; } .g7 { margin-left: 7px; } .g8 { margin-left: 8px; } .g9 { margin-left: 9px; }
.g10 { margin-left: 10px; } .g11 { margin-left: 11px; } .g12 { margin-left: 12px; }
.dm-body { height: 579px; margin: 7px 2px 0 1px; border-top: 2px solid #848484; border-left: 2px solid #848484; background: #fff; display: flex; overflow: hidden; flex: none; }
.tree { list-style: none; margin: 0; padding: 2px 0 0; flex: 1; }
.tree li { height: 22.5px; display: flex; align-items: center; padding-left: 33px; white-space: nowrap; }
.tree li.l0 { padding-left: 9px; }
.tree li.l2 { padding-left: 75px; }
.tree span { margin-left: 6px; line-height: 20px; }
.tree .w1 { letter-spacing: .08px; }
.tree .w2 { letter-spacing: -.12px; }
.tw { width: 8px; height: 8px; margin-right: 10px; fill: none; stroke: #9a9a9a; stroke-width: 1.2; overflow: visible; }
.open .tw { stroke: #3c3c3c; }
.ic { width: 20px; height: 20px; }
.tree li.sel { width: 146px; margin-left: 72px; padding-left: 2px; background: #cce8ff; border: 1px solid #66b3ec; }
.dm-scroll { width: 21px; background: #f0f0f0; padding: 22px 0 0 4px; }
.dm-scroll i { display: block; width: 12px; height: 166px; background: #858585; }
.dm-status { flex: 1; border-top: 1px solid #fff; display: flex; }
.s1 { width: 699px; border-right: 1px solid #dcdcdc; }
.s2 { width: 166px; border-right: 1px solid #dcdcdc; }
```
